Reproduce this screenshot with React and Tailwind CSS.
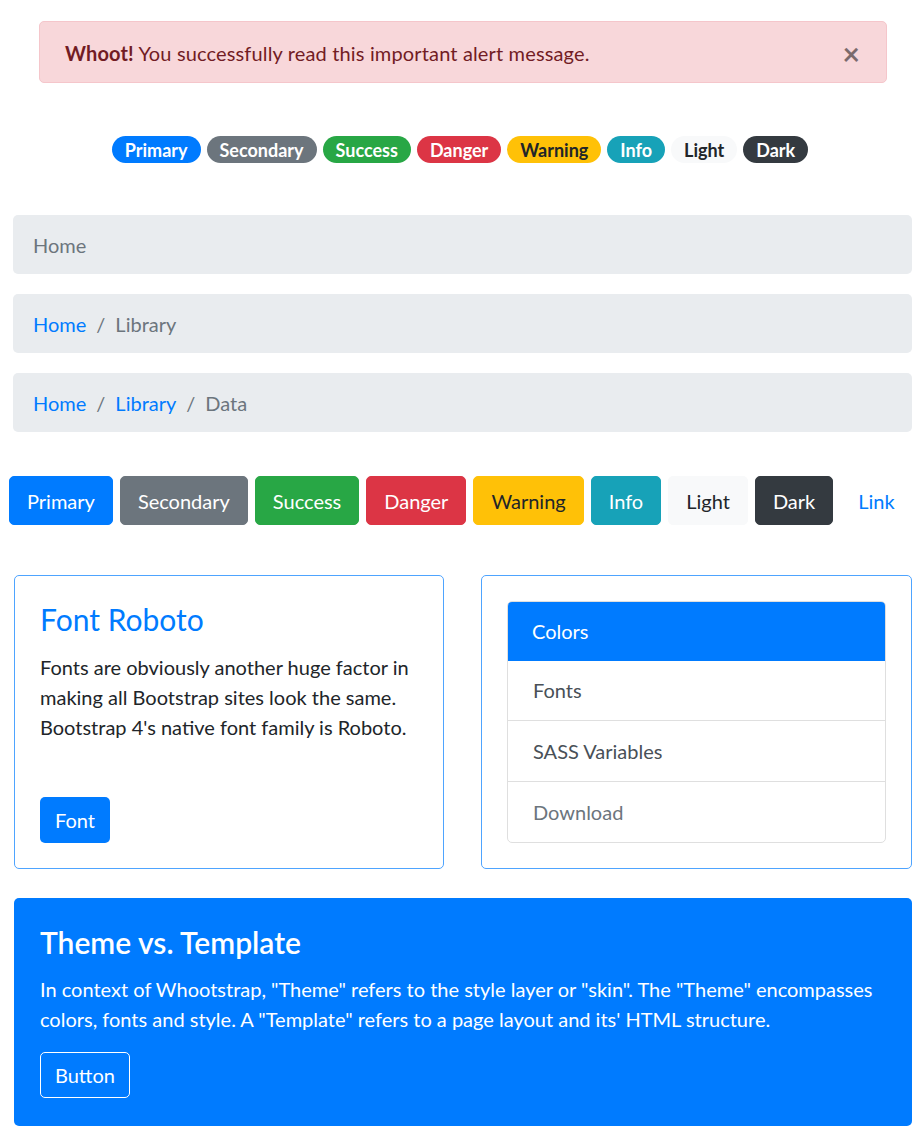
import React from 'react';

const badges = [
  { label: 'Primary', cls: 'bg-[#007bff] text-white' },
  { label: 'Secondary', cls: 'bg-[#6c757d] text-white' },
  { label: 'Success', cls: 'bg-[#28a745] text-white' },
  { label: 'Danger', cls: 'bg-[#dc3545] text-white' },
  { label: 'Warning', cls: 'bg-[#ffc107] text-[#212529]' },
  { label: 'Info', cls: 'bg-[#17a2b8] text-white' },
  { label: 'Light', cls: 'bg-[#f8f9fa] text-[#212529]' },
  { label: 'Dark', cls: 'bg-[#343a40] text-white' },
];

const buttons = [
  { label: 'Primary', cls: 'bg-[#007bff] border-[#007bff] text-white' },
  { label: 'Secondary', cls: 'bg-[#6c757d] border-[#6c757d] text-white' },
  { label: 'Success', cls: 'bg-[#28a745] border-[#28a745] text-white' },
  { label: 'Danger', cls: 'bg-[#dc3545] border-[#dc3545] text-white' },
  { label: 'Warning', cls: 'bg-[#ffc107] border-[#ffc107] text-[#212529]' },
  { label: 'Info', cls: 'bg-[#17a2b8] border-[#17a2b8] text-white' },
  { label: 'Light', cls: 'bg-[#f8f9fa] border-[#f8f9fa] text-[#212529]' },
  { label: 'Dark', cls: 'bg-[#343a40] border-[#343a40] text-white' },
  { label: 'Link', cls: 'bg-transparent border-transparent text-[#007bff]' },
];

function Breadcrumb({ items }) {
  return (
    <nav className="flex items-center rounded-[5px] bg-[#e9ecef] px-[20px] py-[14.5px] leading-[30px] text-[#6c757d]">
      {items.map((item, i) => {
        const last = i === items.length - 1;
        return (
          <React.Fragment key={item}>
            {i > 0 && <span className="px-[10px] text-[#6c757d]">/</span>}
            <span className={last ? 'text-[#6c757d]' : 'text-[#007bff]'}>{item}</span>
          </React.Fragment>
        );
      })}
    </nav>
  );
}

export default function App() {
  return (
    <div
      className="w-[924px] bg-white pb-[14px] pt-[21px] text-[20px] leading-[30px] text-[#212529]"
      style={{ fontFamily: '"Segoe UI", Lato, "Liberation Sans", sans-serif' }}
    >
      {/* alert */}
      <div className="mx-[39px] flex w-[848px] items-center justify-between rounded-[5px] border border-[#f5c6cb] bg-[#f8d7da] px-[25px] pb-[14px] pt-[16px] text-[#721c24]">
        <p className="tracking-[0.15px]">
          <strong className="font-bold">Whoot!</strong> You successfully read this important alert message.
        </p>
        <button className="mr-[1px] text-[30px] font-bold leading-[30px] text-black opacity-50">×</button>
      </div>

      {/* badges */}
      <div className="mt-[53px] flex justify-center gap-[6px] pr-[4px]">
        {badges.map((b) => (
          <span
            key={b.label}
            className={`rounded-full px-[13px] py-[4.5px] text-[18px] font-bold leading-[18px] ${b.cls}`}
          >
            {b.label}
          </span>
        ))}
      </div>

      {/* breadcrumbs */}
      <div className="ml-[13px] mt-[52px] flex w-[899px] flex-col gap-[20px]">
        <Breadcrumb items={['Home']} />
        <Breadcrumb items={['Home', 'Library']} />
        <Breadcrumb items={['Home', 'Library', 'Data']} />
      </div>

      {/* buttons */}
      <div className="ml-[9px] mt-[44px] flex gap-[7px]">
        {buttons.map((b) => (
          <button
            key={b.label}
            className={`rounded-[5px] border px-[17px] py-[8.5px] leading-[30px] ${b.cls}`}
          >
            {b.label}
          </button>
        ))}
      </div>

      {/* cards */}
      <div className="ml-[14px] mt-[50px] flex gap-[37px]">
        <div className="flex w-[430px] flex-col rounded-[5px] border border-[#4ea4ff] p-[25px]">
          <h4 className="mb-[15px] text-[30px] leading-[36px] text-[#007bff]">Font Roboto</h4>
          <p>
            Fonts are obviously another huge factor in making all Bootstrap sites look the same. Bootstrap 4's native
            font family is Roboto.
          </p>
          <div className="mt-auto">
            <button className="rounded-[5px] bg-[#007bff] px-[15px] py-[8px] leading-[30px] text-white">Font</button>
          </div>
        </div>

        <div className="w-[431px] rounded-[5px] border border-[#4ea4ff] p-[25px]">
          <div className="overflow-hidden rounded-[5px] border border-[#dfdfdf]">
            <div className="-m-px bg-[#007bff] px-[25px] py-[15px] text-white">Colors</div>
            <div className="border-b border-[#dfdfdf] px-[25px] py-[15px] text-[#495057]">Fonts</div>
            <div className="border-b border-[#dfdfdf] px-[25px] py-[15px] text-[#495057]">SASS Variables</div>
            <div className="px-[25px] py-[15px] text-[#6c757d]">Download</div>
          </div>
        </div>
      </div>

      {/* jumbotron */}
      <div className="ml-[14px] mt-[29px] w-[898px] rounded-[5px] bg-[#007bff] px-[26px] pb-[28px] pt-[26px] text-white">
        <h3 className="mb-[14px] text-[30px] font-semibold leading-[36px]">Theme vs. Template</h3>
        <p>
          In context of Whootstrap, "Theme" refers to the style layer or "skin". The "Theme" encompasses colors, fonts
          and style. A "Template" refers to a page layout and its' HTML structure.
        </p>
        <button className="mt-[18px] rounded-[5px] border border-white px-[14px] py-[7px] leading-[30px] text-white">
          Button
        </button>
      </div>
    </div>
  );
}
